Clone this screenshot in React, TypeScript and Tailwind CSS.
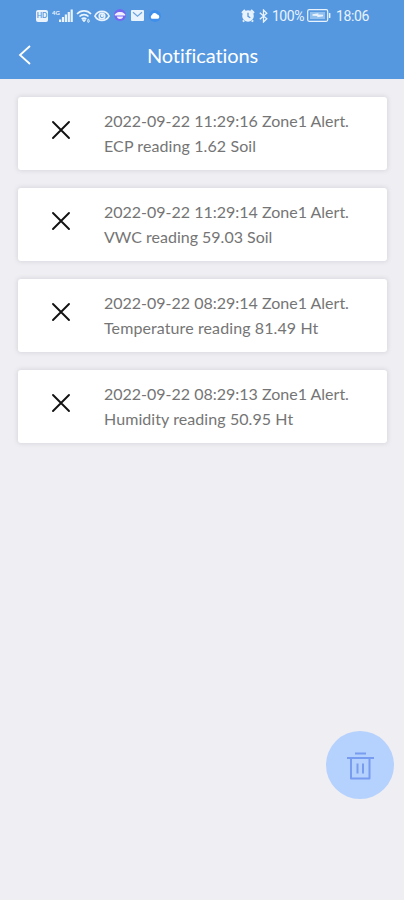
type Notification = {
  title: string
  detail: string
  detailSpacing: string
}

const notifications: Notification[] = [
  { title: "2022-09-22 11:29:16 Zone1 Alert.", detail: "ECP reading 1.62 Soil", detailSpacing: "tracking-[0.1px]" },
  { title: "2022-09-22 11:29:14 Zone1 Alert.", detail: "VWC reading 59.03 Soil", detailSpacing: "tracking-normal" },
  { title: "2022-09-22 08:29:14 Zone1 Alert.", detail: "Temperature reading 81.49 Ht", detailSpacing: "tracking-[0.1px]" },
  { title: "2022-09-22 08:29:13 Zone1 Alert.", detail: "Humidity reading 50.95 Ht", detailSpacing: "tracking-[0.08px]" },
]

function SignalIcons() {
  return (
    <div className="flex items-center text-[#e9f3fd]">
      <span className="flex h-3 w-3 items-center justify-center rounded-[2px] bg-[#eaf3fc] text-[7px] font-bold leading-none text-[#5598df]">HD</span>
      <svg className="ml-1" width="21" height="14" viewBox="0 0 21 14" fill="currentColor">
        <text x="0" y="6" fontSize="6" fontWeight="700">4G</text>
        <rect x="7" y="10.5" width="2.2" height="2.5" />
        <rect x="9.9" y="8" width="2.2" height="5" />
        <rect x="12.8" y="5.5" width="2.2" height="7.5" />
        <rect x="15.7" y="3" width="2.2" height="10" />
        <rect x="18.6" y="0.5" width="2.2" height="12.5" />
      </svg>
      <svg className="ml-[3px]" width="16" height="14" viewBox="0 0 16 14" fill="none" stroke="currentColor" strokeWidth="1.7">
        <path d="M1 5C4.8 .9 11.2.9 15 5M3.5 7.5c2.5-2.5 6.5-2.5 9 0M5.7 10c1.4-1.2 3.2-1.2 4.6 0" />
        <path d="M6.3 10.8h3.4L8 13zM11 11.5l1.4-1.2 1.4 1.2M11 12.4l1.4 1 1.4-1" fill="currentColor" strokeWidth=".7" />
      </svg>
      <svg className="ml-[2px]" width="16" height="12" viewBox="0 0 16 12" fill="none" stroke="currentColor" strokeWidth="1.6">
        <path d="M.9 6C4-.2 12-.2 15.1 6 12 11.8 4 11.8.9 6z" />
        <circle cx="8" cy="6" r="2.8" />
        <circle cx="8.3" cy="5.6" r=".8" fill="currentColor" />
      </svg>
      <svg className="relative -top-px ml-1" width="12" height="12" viewBox="0 0 12 12">
        <circle cx="6" cy="6" r="6" fill="#7468ef" />
        <path d="M.8 5.3C2 4.6 2.4 3 6 3s4 1.6 5.2 2.3v1.2H.8zM2.8 7.6h6.4C8.7 9.4 7.4 10 6 10s-2.7-.6-3.2-2.4z" fill="#f2efff" />
      </svg>
      <svg className="ml-[5px]" width="13" height="11" viewBox="0 0 13 11">
        <rect width="13" height="11" rx="1" fill="currentColor" />
        <path d="M2 2.3l4.5 4 4.5-4" fill="none" stroke="#6ba5df" strokeWidth="1.2" />
      </svg>
      <svg className="ml-[5px]" width="12" height="12" viewBox="0 0 12 12">
        <circle cx="6" cy="6" r="6" fill="#3f8fea" />
        <path d="M3 8.8a2 2 0 010-3.7 2.8 2.8 0 015.2-.5 2.2 2.2 0 01.8 4.2z" fill="#fff" />
      </svg>
    </div>
  )
}

function SystemIcons() {
  return (
    <div className="flex items-center text-[#e9f3fd]">
      <svg width="14" height="14" viewBox="0 0 14 14">
        <path d="M1 4l3-3M10 1l3 3M3 11.5l-1 1.2M11 11.5l1 1.2" stroke="currentColor" strokeWidth="2" />
        <circle cx="7" cy="7" r="5.8" fill="currentColor" />
        <path d="M7 3.7V7.4l2.3 1.3" fill="none" stroke="#5598df" strokeWidth="1.3" />
      </svg>
      <svg className="ml-1" width="9" height="14" viewBox="0 0 9 14" fill="none" stroke="currentColor" strokeWidth="1.3">
        <path d="M.8 3.8l7 6L4.5 13V1l3.3 3.2-7 6" />
      </svg>
      <span className="ml-[4px] w-[32px] whitespace-nowrap font-['Roboto',sans-serif] text-[14px] leading-none tracking-[-0.4px]">100%</span>
      <svg className="ml-[3px]" width="24" height="13" viewBox="0 0 24 13">
        <rect x=".7" y=".7" width="20" height="11.6" rx="1.5" fill="none" stroke="currentColor" strokeWidth="1.2" />
        <path d="M3 3h15v7H3z" fill="#91c0ef" />
        <path d="M5.5 5.2l6-.9-.4 1.3 5 .1v1.6l-6 1 .4-1.4-5-.1z" fill="currentColor" />
        <rect x="21.9" y="4" width="1.5" height="5" rx=".5" fill="currentColor" />
      </svg>
      <span className="ml-[5px] whitespace-nowrap font-['Roboto',sans-serif] text-[14px] leading-none tracking-[-0.35px]">18:06</span>
    </div>
  )
}

function NotificationCard({ title, detail, detailSpacing }: Notification) {
  return (
    <article className="flex h-[73px] rounded-[3px] bg-white shadow-[0_0_4px_1px_rgba(75,75,90,0.13)]">
      <button aria-label="Dismiss notification" className="ml-[33px] mt-[23px] h-5 w-5">
        <svg width="20" height="20" viewBox="0 0 20 20" stroke="#111" strokeWidth="1.9" strokeLinecap="round">
          <path d="M2 2l16 16M18 2L2 18" />
        </svg>
      </button>
      <div className="ml-[33px] mt-[11px] whitespace-nowrap text-[16px] leading-[25px] text-[#757575]">
        <p>{title}</p>
        <p className={detailSpacing}>{detail}</p>
      </div>
    </article>
  )
}

export default function App() {
  return (
    <main className="flex h-[900px] w-[404px] flex-col overflow-hidden bg-[#eeeef3] font-['Lato',sans-serif]">
      <header className="h-[79px] shrink-0 bg-[#5598df] text-white">
        <div className="flex h-[31px] items-center justify-between pl-[36px] pr-[35px]">
          <SignalIcons />
          <SystemIcons />
        </div>
        <div className="grid h-[47px] grid-cols-[60px_1fr_60px] items-center">
          <button aria-label="Back" className="ml-[18px] w-3">
            <svg width="13" height="20" viewBox="0 0 13 20" fill="none" stroke="currentColor" strokeWidth="1.8">
              <path d="M12 1L2 10l10 9" />
            </svg>
          </button>
          <h1 className="pl-px text-center text-[20px] leading-6 tracking-[-0.1px]">Notifications</h1>
        </div>
      </header>
      <section className="flex flex-col gap-[18px] pl-[18px] pr-[17px] pt-[18px]">
        {notifications.map((item) => (
          <NotificationCard key={item.title} {...item} />
        ))}
      </section>
      <button aria-label="Delete all notifications" className="mb-[101px] ml-auto mr-[10px] mt-auto flex h-[68px] w-[68px] items-center justify-center rounded-full bg-[#b5d1fd]">
        <svg className="mt-[2px]" width="28" height="28" viewBox="0 0 28 28" fill="none" stroke="#789cf0" strokeWidth="2" strokeLinejoin="round">
          <path d="M9 1.5h11M1 6h27M5 6v20.5h18.5V6M11.5 11.5v10M17 11.5v10" />
        </svg>
      </button>
    </main>
  )
}
